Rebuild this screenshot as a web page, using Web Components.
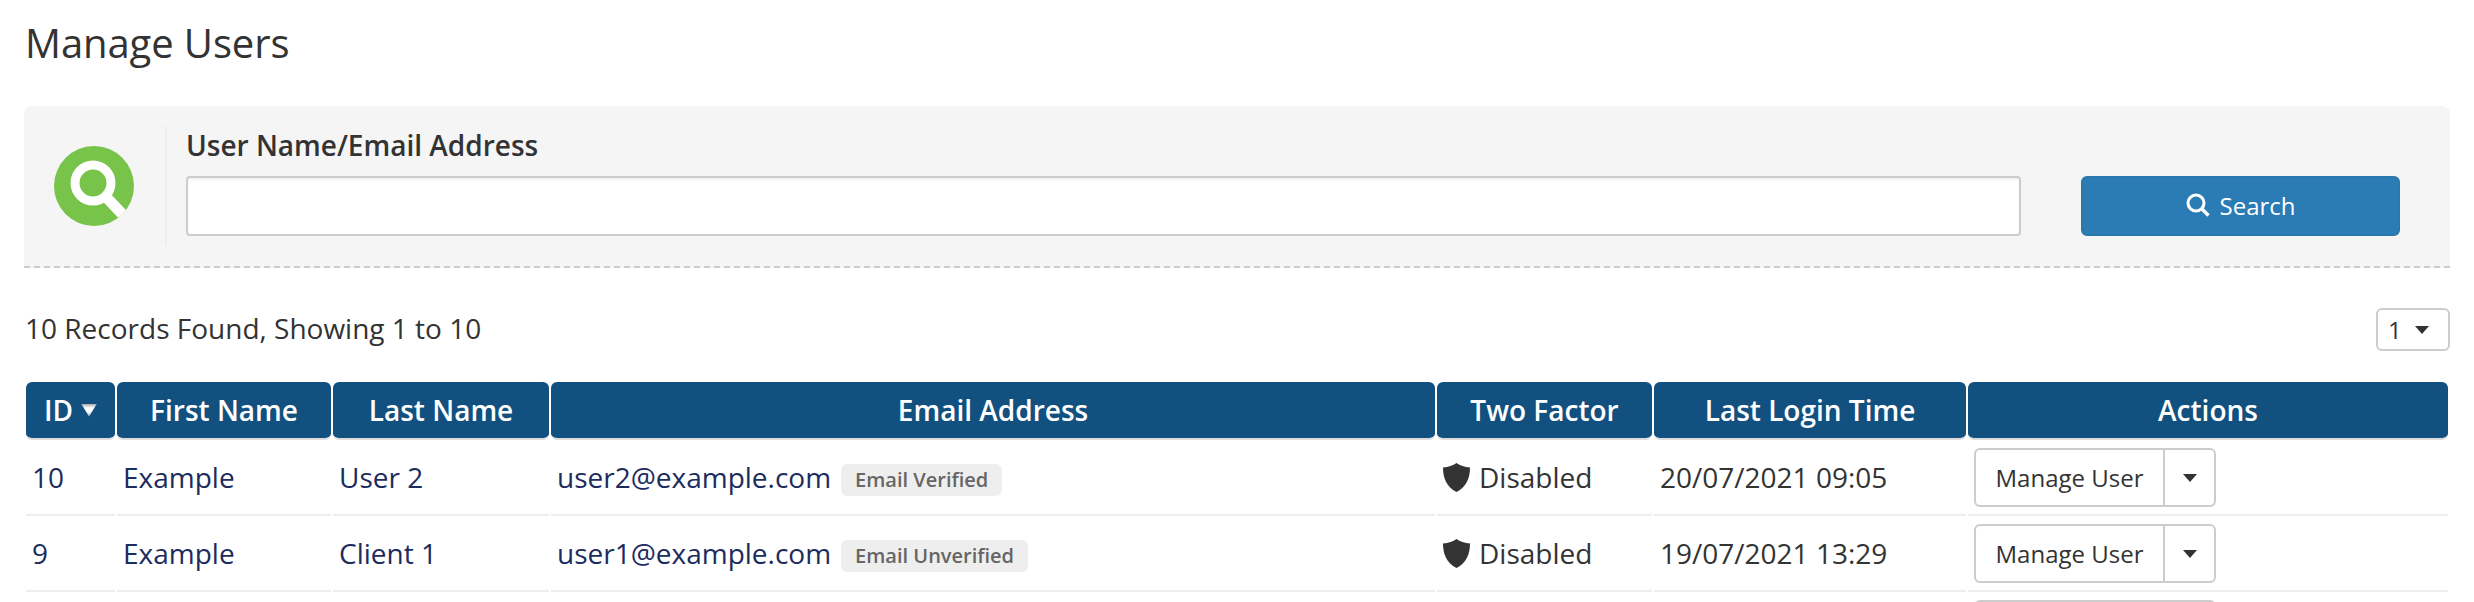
<!DOCTYPE html>
<html lang="en">
<head>
<meta charset="utf-8">
<title>Manage Users</title>
<style>
    html, body { margin: 0; height: 602px; overflow: hidden; background: #fff; }
    body { font-family: "Open Sans", "Liberation Sans", sans-serif; color: #333; }
</style>
</head>
<body>
<mu-page>
    <mu-search-panel label="User Name/Email Address"></mu-search-panel>
    <mu-results summary="10 Records Found, Showing 1 to 10" page="1">
        <mu-row head>
            <mu-th sorted>ID</mu-th>
            <mu-th>First Name</mu-th>
            <mu-th>Last Name</mu-th>
            <mu-th>Email Address</mu-th>
            <mu-th>Two Factor</mu-th>
            <mu-th>Last Login Time</mu-th>
            <mu-th>Actions</mu-th>
        </mu-row>
        <mu-user-row uid="10" first="Example" last="User 2" email="user2@example.com" badge="Email Verified" login="20/07/2021 09:05"></mu-user-row>
        <mu-user-row uid="9" first="Example" last="Client 1" email="user1@example.com" badge="Email Unverified" login="19/07/2021 13:29"></mu-user-row>
        <mu-user-row partial></mu-user-row>
    </mu-results>
</mu-page>

<script>
// page shell with the title
class MuPage extends HTMLElement {
    constructor() {
        super();
        this.attachShadow({ mode: 'open' });
        this.shadowRoot.innerHTML = `
            <style>
                :host { display: block; padding: 0 24px; }
                h1 {
                    margin: 0;
                    padding: 0 0 0 1px;
                    height: 106px;
                    box-sizing: border-box;
                    font-size: 40px;
                    font-weight: 400;
                    line-height: 86px;
                    letter-spacing: -0.1px;
                    color: #333;
                }
            </style>
            <h1>Manage Users</h1>
            <slot></slot>
        `;
    }
}

class MuSearchPanel extends HTMLElement {
    constructor() {
        super();
        this.attachShadow({ mode: 'open' });
    }

    connectedCallback() {
        const label = this.getAttribute('label') || '';
        this.shadowRoot.innerHTML = `
            <style>
                :host {
                    display: flex;
                    align-items: stretch;
                    height: 162px;
                    box-sizing: border-box;
                    padding: 20px 50px 30px 0;
                    background: #f5f5f5;
                    border-bottom: 2px dashed #ccc;
                    border-radius: 8px 8px 0 0;
                }
                .logo {
                    flex: 0 0 143px;
                    display: flex;
                    align-items: center;
                    justify-content: center;
                    height: 120px;
                    box-sizing: border-box;
                    border-right: 2px solid #eee;
                }
                .logo svg { margin-left: -2px; }
                .field { flex: 1; margin-left: 19px; display: flex; flex-direction: column; justify-content: flex-end; }
                label { font-size: 28px; font-weight: 600; line-height: 38px; margin-bottom: 12px; color: #333; }
                .box {
                    height: 60px;
                    box-sizing: border-box;
                    background: #fff;
                    border: 2px solid #ccc;
                    border-radius: 4px;
                    box-shadow: inset 0 2px 2px rgba(0,0,0,.05);
                }
                button {
                    align-self: flex-end;
                    flex: 0 0 319px;
                    height: 60px;
                    margin-left: 60px;
                    padding: 0 0 2px;
                    display: flex;
                    align-items: center;
                    justify-content: center;
                    gap: 10px;
                    background: #2b7bb5;
                    border: 2px solid #2a77ae;
                    border-radius: 6px;
                    color: #fff;
                    font: 400 24px "Open Sans", "Liberation Sans", sans-serif;
                }
            </style>
            <div class="logo">
                <svg width="80" height="80" viewBox="0 0 80 80">
                    <defs><clipPath id="disc"><circle cx="40" cy="40" r="40"/></clipPath></defs>
                    <circle cx="40" cy="40" r="40" fill="#78c349"/>
                    <circle cx="39" cy="37" r="18" fill="none" stroke="#fff" stroke-width="9"/>
                    <path d="M53 52 L72 72" stroke="#fff" stroke-width="11" clip-path="url(#disc)"/>
                </svg>
            </div>
            <div class="field">
                <label>${label}</label>
                <div class="box"></div>
            </div>
            <button type="button">
                <svg width="24" height="24" viewBox="0 0 24 24" fill="none" stroke="#fff">
                    <circle cx="10" cy="10" r="8" stroke-width="3"/>
                    <path d="M15.5 15.5 L22.5 22.5" stroke-width="3.4"/>
                </svg>
                Search
            </button>
        `;
    }
}

// summary line, pager and the table rows
class MuResults extends HTMLElement {
    constructor() {
        super();
        this.attachShadow({ mode: 'open' });
    }

    connectedCallback() {
        this.shadowRoot.innerHTML = `
            <style>
                :host { display: block; }
                .bar {
                    display: flex;
                    align-items: center;
                    justify-content: space-between;
                    margin-top: 40px;
                    height: 43px;
                    margin-bottom: 31px;
                    padding-left: 1px;
                    font-size: 28px;
                    color: #333;
                }
                .bar > span { margin-top: -3px; }
                .pager {
                    width: 74px;
                    height: 43px;
                    box-sizing: border-box;
                    display: flex;
                    align-items: center;
                    gap: 13px;
                    padding-left: 10px;
                    border: 2px solid #ccc;
                    border-radius: 6px;
                    font-size: 24px;
                }
                .pager i {
                    width: 0; height: 0;
                    border-left: 7px solid transparent;
                    border-right: 7px solid transparent;
                    border-top: 8px solid #333;
                }
                .table { margin: 0 2px; }
            </style>
            <div class="bar">
                <span>${this.getAttribute('summary') || ''}</span>
                <div class="pager"><span>${this.getAttribute('page') || '1'}</span><i></i></div>
            </div>
            <div class="table"><slot></slot></div>
        `;
    }
}

const COLUMNS = '89px 214px 216px 884px 215px 312px 480px';

class MuRow extends HTMLElement {
    constructor() {
        super();
        this.attachShadow({ mode: 'open' });
        this.shadowRoot.innerHTML = `
            <style>
                :host {
                    display: grid;
                    grid-template-columns: ${COLUMNS};
                    column-gap: 2px;
                }
            </style>
            <slot></slot>
        `;
    }
}

class MuTh extends HTMLElement {
    constructor() {
        super();
        this.attachShadow({ mode: 'open' });
    }

    connectedCallback() {
        const arrow = this.hasAttribute('sorted') ? '<i></i>' : '';
        this.shadowRoot.innerHTML = `
            <style>
                :host {
                    display: flex;
                    align-items: center;
                    justify-content: center;
                    gap: 8px;
                    height: 58px;
                    box-sizing: border-box;
                    background: #12517f;
                    border-bottom: 2px solid #ddd;
                    background-clip: padding-box;
                    border-radius: 6px;
                    color: #fff;
                    font-size: 28px;
                    font-weight: 600;
                }
                i {
                    width: 16px;
                    height: 13px;
                    clip-path: polygon(0 0, 100% 0, 50% 100%);
                    background: linear-gradient(#aaa 0, #fff 30%, #fff 60%, #aaa 100%);
                }
            </style>
            <slot></slot>${arrow}
        `;
    }
}

class MuTd extends HTMLElement {
    constructor() {
        super();
        this.attachShadow({ mode: 'open' });
        this.shadowRoot.innerHTML = `
            <style>
                :host {
                    display: flex;
                    align-items: center;
                    height: 76px;
                    box-sizing: border-box;
                    padding: 0 6px;
                    border-bottom: 2px solid #eee;
                    font-size: 28px;
                    white-space: nowrap;
                }
                :host([link]) { color: #1c2c5e; }
            </style>
            <slot></slot>
        `;
    }
}

class MuBadge extends HTMLElement {
    constructor() {
        super();
        this.attachShadow({ mode: 'open' });
        this.shadowRoot.innerHTML = `
            <style>
                :host {
                    display: inline-block;
                    height: 32px;
                    box-sizing: border-box;
                    margin: 6px 0 0 10px;
                    padding: 0 14px;
                    background: #eee;
                    border-radius: 6px;
                    color: #666;
                    font-size: 20px;
                    font-weight: 600;
                    line-height: 32px;
                }
            </style>
            <slot></slot>
        `;
    }
}

class MuSplitButton extends HTMLElement {
    constructor() {
        super();
        this.attachShadow({ mode: 'open' });
        this.shadowRoot.innerHTML = `
            <style>
                :host {
                    display: flex;
                    flex: none;
                    align-self: flex-start;
                    margin-top: 8px;
                    width: 242px;
                    height: 59px;
                    box-sizing: border-box;
                    border: 2px solid #ccc;
                    border-radius: 6px;
                    background: #fff;
                    font-size: 24px;
                    color: #333;
                }
                .main {
                    flex: 0 0 189px;
                    box-sizing: border-box;
                    display: flex;
                    align-items: center;
                    justify-content: center;
                    border-right: 2px solid #ccc;
                }
                .caret { flex: 1; display: flex; align-items: center; justify-content: center; }
                i {
                    width: 0; height: 0;
                    border-left: 7px solid transparent;
                    border-right: 7px solid transparent;
                    border-top: 8px solid #333;
                }
            </style>
            <div class="main"><slot></slot></div>
            <div class="caret"><i></i></div>
        `;
    }
}

// one user, filled from attributes. "partial" is the row cut off by the window
class MuUserRow extends HTMLElement {
    constructor() {
        super();
        this.attachShadow({ mode: 'open' });
    }

    connectedCallback() {
        const a = (name) => this.getAttribute(name) || '';
        const shield = `<svg width="27" height="29" viewBox="0 0 27 29" style="margin:0 9px 0 0;flex:none">
            <path fill="#333" d="M13.5 0C17 2.6 21.5 4 27 4.5C27 15 23.5 24 13.5 29C3.5 24 0 15 0 4.5C5.5 4 10 2.6 13.5 0Z"/></svg>`;
        const partial = this.hasAttribute('partial');
        this.shadowRoot.innerHTML = `
            <style>
                :host { display: block; }
                :host([partial]) { height: 10px; overflow: hidden; }
            </style>
            <mu-row>
                <mu-td link>${a('uid')}</mu-td>
                <mu-td link>${a('first')}</mu-td>
                <mu-td link>${a('last')}</mu-td>
                <mu-td link>${a('email')}${partial ? '' : `<mu-badge>${a('badge')}</mu-badge>`}</mu-td>
                <mu-td>${partial ? '' : `${shield}Disabled`}</mu-td>
                <mu-td>${a('login')}</mu-td>
                <mu-td><mu-split-button>${partial ? '' : 'Manage User'}</mu-split-button></mu-td>
            </mu-row>
        `;
    }
}

customElements.define('mu-page', MuPage);
customElements.define('mu-search-panel', MuSearchPanel);
customElements.define('mu-results', MuResults);
customElements.define('mu-row', MuRow);
customElements.define('mu-th', MuTh);
customElements.define('mu-td', MuTd);
customElements.define('mu-badge', MuBadge);
customElements.define('mu-split-button', MuSplitButton);
customElements.define('mu-user-row', MuUserRow);
</script>
</body>
</html>
